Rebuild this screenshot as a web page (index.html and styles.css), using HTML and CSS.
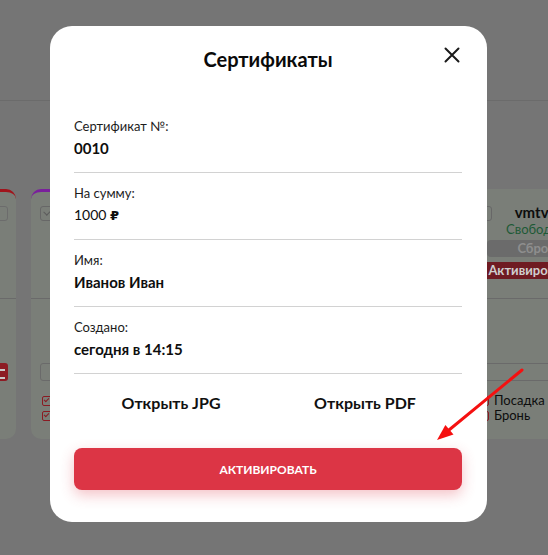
FILE: index.html
```html
<!DOCTYPE html>
<html lang="ru">
<head>
<meta charset="utf-8">
<title>Сертификаты</title>
<link rel="stylesheet" href="styles.css">
</head>
<body>
<div class="page">
  <header class="topbar"></header>
  <main class="cards">
    <section class="card card--red">
      <div class="card-head">
        <span class="check"></span>
        <div class="info"></div>
        <span class="edit-icon"></span>
      </div>
      <div class="card-mid"></div>
      <div class="card-input-row">
        <span class="input"></span>
        <span class="badge"></span>
      </div>
      <ul class="legend"></ul>
    </section>
    <section class="card card--purple">
      <div class="card-head">
        <span class="check check--on"></span>
        <div class="info"></div>
        <span class="edit-icon"></span>
      </div>
      <div class="card-mid"></div>
      <div class="card-input-row">
        <span class="input"></span>
      </div>
      <ul class="legend">
        <li><span class="mark mark--on"></span></li>
        <li><span class="mark mark--on"></span></li>
      </ul>
    </section>
    <section class="card">
      <div class="card-head">
        <span class="check"></span>
        <div class="info"></div>
        <span class="edit-icon"></span>
      </div>
      <div class="card-mid"></div>
      <div class="card-input-row">
        <span class="input"></span>
      </div>
      <ul class="legend"></ul>
    </section>
    <section class="card">
      <div class="card-head">
        <span class="check"></span>
        <div class="info">
          <div class="info-title">vmtv1</div>
          <div class="info-status">Свободно</div>
          <div class="btn-grey">Сброс</div>
          <div class="btn-red">Активировать</div>
        </div>
        <span class="edit-icon"></span>
      </div>
      <div class="card-mid"></div>
      <div class="card-input-row">
        <span class="input"></span>
      </div>
      <ul class="legend">
        <li><span class="mark"></span>Посадка</li>
        <li><span class="mark"></span>Бронь</li>
      </ul>
    </section>
  </main>
</div>

<div class="overlay">
  <div class="modal">
    <h2 class="modal-title">Сертификаты</h2>
    <button class="close" aria-label="Закрыть">
      <svg width="16" height="16" viewBox="0 0 16 16"><path d="M1.5 1.5 L14.5 14.5 M14.5 1.5 L1.5 14.5" stroke="#1a1a1a" stroke-width="2" stroke-linecap="round" fill="none"/></svg>
    </button>
    <div class="fields">
      <div class="field">
        <div class="label">Сертификат №:</div>
        <div class="value">0010</div>
      </div>
      <div class="field">
        <div class="label">На сумму:</div>
        <div class="value value--normal">1000 <b class="rub">₽</b></div>
      </div>
      <div class="field">
        <div class="label">Имя:</div>
        <div class="value">Иванов Иван</div>
      </div>
      <div class="field">
        <div class="label">Создано:</div>
        <div class="value">сегодня в 14:15</div>
      </div>
    </div>
    <div class="open-links">
      <a class="open-link">Открыть JPG</a>
      <a class="open-link">Открыть PDF</a>
    </div>
    <button class="activate">АКТИВИРОВАТЬ</button>
  </div>
</div>

<svg class="annotation" width="548" height="555" viewBox="0 0 548 555">
  <line x1="522" y1="370" x2="449" y2="430" stroke="#f51010" stroke-width="3" stroke-linecap="round"/>
  <polygon points="437,440 453.5,434.6 445.4,425" fill="#f51010"/>
</svg>
</body>
</html>
```

FILE: styles.css
```css
* { box-sizing: border-box; }

html, body {
  margin: 0;
  padding: 0;
  width: 548px;
  height: 555px;
  overflow: hidden;
  background: #757575;
  font-family: Lato, "Noto Sans", "DejaVu Sans", sans-serif;
}

.page {
  width: 548px;
  height: 555px;
  overflow: hidden;
}

.topbar {
  height: 101px;
  border-bottom: 1px solid #6b6b6b;
}

.cards {
  display: flex;
  gap: 15px;
  margin-top: 88px;
  margin-left: -187.5px;
}

.card {
  flex: 0 0 203.5px;
  height: 250px;
  background: #7a7e78;
  border-radius: 10px;
  border-top: 3px solid #7a7e78;
  color: #0d0d0d;
  overflow: hidden;
}
.card--red { border-top-color: #a0141c; }
.card--purple { border-top-color: #7a1f9c; }

.card-head {
  display: grid;
  grid-template-columns: 15px 87px 1fr;
  padding: 14px 8px 0 9px;
  height: 107px;
  border-bottom: 1px solid #6a6a6a;
}

.check {
  width: 15px;
  height: 15px;
  border: 1px solid #676767;
  border-radius: 3px;
  position: relative;
}
.check--on::after {
  content: "";
  position: absolute;
  left: 3px;
  top: 2px;
  width: 6px;
  height: 4px;
  border-left: 1.5px solid #5c5c5c;
  border-bottom: 1.5px solid #5c5c5c;
  transform: rotate(-45deg);
}

.info {
  text-align: center;
  padding-left: 1px;
}
.info-title {
  font-weight: 700;
  font-size: 15px;
  line-height: 18px;
  margin-top: -3px;
  white-space: nowrap;
}
.info-status {
  color: #1e5a36;
  font-size: 13px;
  line-height: 17px;
  white-space: nowrap;
}
.btn-grey {
  margin: 2px -6px 0;
  height: 17px;
  line-height: 17px;
  border-radius: 4px;
  background: #6b6b6b;
  color: #8e8e8e;
  font-size: 13px;
  font-weight: 700;
}
.btn-red {
  margin: 5px -14px 0 -24px;
  height: 17px;
  line-height: 17px;
  background: #6f1b22;
  color: #cfcfcf;
  font-size: 13px;
  font-weight: 700;
  white-space: nowrap;
}

.edit-icon {
  justify-self: end;
  width: 18px;
  height: 15px;
  border: 1px solid #6c6c6c;
  border-radius: 3px;
}

.card-mid {
  height: 64px;
}

.card-input-row {
  display: flex;
  align-items: stretch;
  height: 18px;
  padding: 0 8px 0 9px;
  gap: 6px;
}
.input {
  flex: 1;
  border: 1px solid #6a6a6a;
  border-radius: 3px;
}
.badge {
  width: 42px;
  background: #8d1c24;
  border-radius: 3px;
  position: relative;
}
.badge::after {
  content: "";
  position: absolute;
  right: 3px;
  top: 6px;
  width: 5px;
  height: 6px;
  border-top: 2px solid #c8c8c8;
  border-bottom: 2px solid #c8c8c8;
}

.legend {
  list-style: none;
  margin: 0;
  padding: 12px 0 0 11px;
  font-size: 13px;
  line-height: 15px;
  color: #0d0d0d;
}
.legend li {
  display: flex;
  align-items: center;
  gap: 5px;
  height: 15px;
}
.mark {
  width: 10px;
  height: 10px;
  border: 1.5px solid #8a1a22;
  border-radius: 2px;
  position: relative;
}
.mark--on::after {
  content: "";
  position: absolute;
  left: 1px;
  top: 1px;
  width: 4px;
  height: 2px;
  border-left: 1.5px solid #8a1a22;
  border-bottom: 1.5px solid #8a1a22;
  transform: rotate(-45deg);
}

/* Modal */
.overlay {
  position: fixed;
  inset: 0;
  display: flex;
  align-items: flex-start;
  padding: 26px 0 0 50px;
}

.modal {
  position: relative;
  width: 437px;
  background: #fff;
  border-radius: 22px;
  padding: 19px 25px 32px 24px;
  color: #111;
}

.modal-title {
  margin: 0;
  text-align: center;
  font-size: 20px;
  line-height: 28px;
  font-weight: 700;
  color: #0a0a0a;
}

.close {
  position: absolute;
  top: 21px;
  right: 27px;
  width: 16px;
  height: 16px;
  padding: 0;
  border: 0;
  background: none;
  display: flex;
}

.fields {
  margin-top: 33px;
}

.field {
  padding: 10px 0 13px;
  border-bottom: 1px solid #d2d2d2;
}

.label {
  font-size: 13px;
  line-height: 20px;
  color: #1c1c1c;
  margin-bottom: 1px;
}

.value {
  font-size: 15px;
  line-height: 22px;
  height: 22px;
  font-weight: 700;
  color: #0e0e0e;
}
.value--normal {
  font-weight: 400;
  font-size: 14px;
}
.rub {
  font-weight: 700;
  font-family: "DejaVu Sans", sans-serif;
  font-size: 13px;
  line-height: 0;
}

.open-links {
  display: grid;
  grid-template-columns: 1fr 1fr;
  padding: 17px 0 0;
  height: 74px;
}
.open-link {
  text-align: center;
  font-size: 16px;
  line-height: 24px;
  font-weight: 700;
  color: #111;
  cursor: pointer;
}

.activate {
  display: block;
  width: 100%;
  height: 42px;
  border: 0;
  border-radius: 8px;
  background: #dc3545;
  color: #fff;
  font-family: Lato, "Noto Sans", sans-serif;
  font-size: 12px;
  font-weight: 700;
  box-shadow: 0 5px 14px rgba(220, 53, 69, 0.3);
}

.annotation {
  position: fixed;
  left: 0;
  top: 0;
  pointer-events: none;
}
```
